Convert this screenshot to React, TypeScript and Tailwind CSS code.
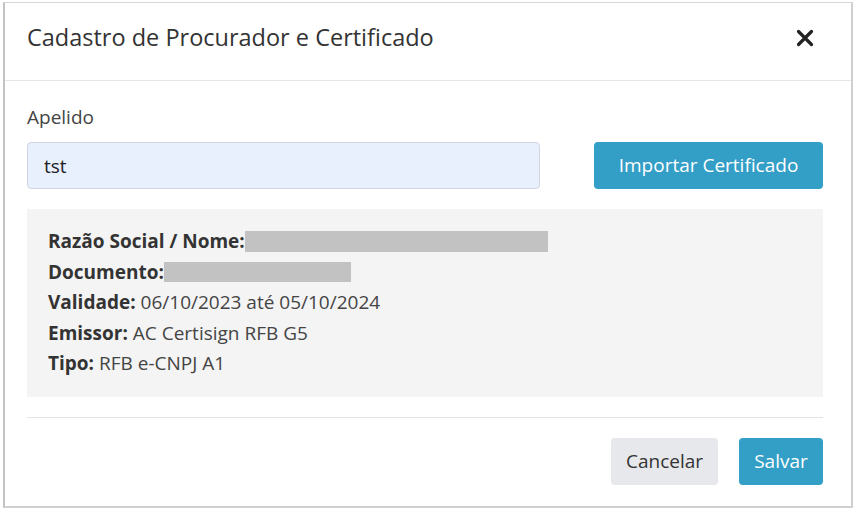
import React from "react";

function Field({ label, value }: { label: string; value?: string }) {
  return (
    <div className="h-[30.5px] flex items-center">
      <span className="font-bold text-[#333]">{label}</span>
      {value && <span className="ml-[5px] text-[#444]">{value}</span>}
    </div>
  );
}

export default function App() {
  return (
    <div
      className="w-[856px] h-[512px] bg-white pl-[3px] pt-[2px]"
      style={{ fontFamily: '"Open Sans", "Noto Sans", sans-serif' }}
    >
      <div className="w-[850px] h-[506px] border border-[#d6d6d6] border-l-2 border-l-[#c4c4c4] border-b-2 border-b-[#d0d0d0] border-r-2 border-r-[#d0d0d0] flex flex-col">
        {/* header */}
        <div className="h-[78px] flex items-center justify-between pl-[22px] pr-[37px] pb-[8px] border-b border-[#e3e6ea]">
          <h1 className="text-[23.5px] text-[#333]">Cadastro de Procurador e Certificado</h1>
          <button className="text-[#222]">
            <svg width="18" height="18" viewBox="0 0 18 18">
              <path d="M2.5 2.5 L15.5 15.5 M15.5 2.5 L2.5 15.5" stroke="#222" strokeWidth="3.2" strokeLinecap="round" />
            </svg>
          </button>
        </div>

        {/* body */}
        <div className="px-[22px] pt-[24px]">
          <label className="block text-[19px] text-[#444] h-[24px] leading-[24px]">Apelido</label>
          <div className="flex items-center mt-[13px]">
            <input
              readOnly
              value="tst"
              className="w-[513px] h-[47px] rounded-[4px] border border-[#cfd6e0] bg-[#e8f0fe] px-[16px] text-[19px] text-[#222] outline-none"
            />
            <button className="ml-[54px] w-[229px] h-[47px] rounded-[4px] bg-[#339ec6] text-white text-[19px]">
              Importar Certificado
            </button>
          </div>

          <div className="mt-[20px] w-[796px] h-[188px] bg-[#f4f4f4] px-[21px] pt-[17px] text-[19px]">
            <div className="h-[30.7px] flex items-center">
              <span className="font-bold text-[#333]">Razão Social / Nome:</span>
              <span className="inline-block w-[303px] h-[21px] bg-[#c2c2c2]" />
            </div>
            <div className="h-[30.7px] flex items-center">
              <span className="font-bold text-[#333]">Documento:</span>
              <span className="inline-block w-[187px] h-[20px] bg-[#c2c2c2]" />
            </div>
            <Field label="Validade:" value="06/10/2023 até 05/10/2024" />
            <Field label="Emissor:" value="AC Certisign RFB G5" />
            <Field label="Tipo:" value="RFB e-CNPJ A1" />
          </div>

          <div className="mt-[20px] w-[796px] border-t border-[#e3e3e3]" />

          <div className="flex justify-end gap-[21px] w-[796px] mt-[20px]">
            <button className="w-[107px] h-[47px] rounded-[4px] bg-[#e6e8ec] text-[#333] text-[19px]">Cancelar</button>
            <button className="w-[84px] h-[47px] rounded-[4px] bg-[#339ec6] text-white text-[19px]">Salvar</button>
          </div>
        </div>
      </div>
    </div>
  );
}
